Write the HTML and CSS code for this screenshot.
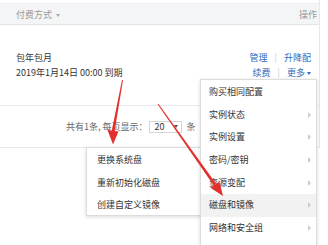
FILE: index.html
```html
<!DOCTYPE html>
<html lang="zh-CN">
<head>
<meta charset="utf-8">
<link rel="stylesheet" href="styles.css">
</head>
<body>
<div class="page">
  <div class="table">
    <div class="thead">
      <span class="th">付费方式 <i class="caret"></i></span>
      <span class="th">操作</span>
    </div>
    <div class="row">
      <div class="pay">
        <div>包年包月</div>
        <div>2019年1月14日 00:00 到期</div>
      </div>
      <div class="ops">
        <div class="ops-line"><a>管理</a><span class="sep">|</span><a>升降配</a></div>
        <div class="ops-line"><a>续费</a><span class="sep">|</span><a>更多<i class="caret blue"></i></a></div>
      </div>
    </div>
    <div class="pager">
      <span>共有1条, 每页显示：</span>
      <span class="select">20<i class="caret dark"></i></span>
      <span>条</span>
    </div>
  </div>

  <ul class="menu submenu">
    <li>更换系统盘</li>
    <li>重新初始化磁盘</li>
    <li>创建自定义镜像</li>
  </ul>

  <ul class="menu main-menu">
    <li>购买相同配置</li>
    <li class="has-sub">实例状态</li>
    <li class="has-sub">实例设置</li>
    <li class="has-sub">密码/密钥</li>
    <li class="has-sub">资源变配</li>
    <li class="has-sub active">磁盘和镜像</li>
    <li class="has-sub">网络和安全组</li>
  </ul>

  <svg class="arrows" width="328" height="245" viewBox="0 0 328 245">
    <polygon points="122,80 123,80 114.5,132 111.5,132" fill="#e3302d"/>
    <polygon points="107.5,130 118.5,131.5 113,144.5" fill="#e3302d"/>
    <polygon points="157.6,104.3 158.4,103.7 216.1,183.7 213.7,185.5" fill="#e3302d"/>
    <polygon points="210.4,187.7 219.4,181.4 223,196" fill="#e3302d"/>
  </svg>
</div>
</body>
</html>
```
FILE: styles.css
```css
* { box-sizing: border-box; }
html, body { margin: 0; padding: 0; }
body {
  width: 328px;
  height: 245px;
  overflow: hidden;
  background: #fff;
  font-family: "Noto Sans CJK SC", "Microsoft YaHei", sans-serif;
  font-size: 9px;
  color: #333;
}
.page { position: relative; width: 328px; height: 245px; overflow: hidden; }

.table {
  width: 320px;
  border-right: 1px solid #e6e8eb;
  padding-top: 3px;
}
.thead {
  height: 22px;
  background: #f4f5f7;
  border-top: 1px solid #eceef1;
  border-bottom: 1px solid #e1e4e8;
  display: flex;
  justify-content: space-between;
  align-items: center;
  padding: 0 2px 0 16px;
  color: #999;
}
.caret {
  display: inline-block;
  width: 0; height: 0;
  border-left: 2.5px solid transparent;
  border-right: 2.5px solid transparent;
  border-top: 3px solid #aaa;
  vertical-align: middle;
  margin-left: 2px;
}
.caret.blue { border-top-color: #2b6cbf; }
.caret.dark { border-top-color: #555; margin-left: 9px; }

.row {
  height: 81px;
  border-bottom: 1px solid #e8eaed;
  display: flex;
  justify-content: space-between;
  padding: 25px 8px 0 16px;
  line-height: 15px;
}
.ops { text-align: right; }
.ops a { color: #2b6cbf; }
.ops .sep { color: #ccc; margin: 0 7px; }

.pager {
  height: 42px;
  border-bottom: 1px solid #e6e8eb;
  display: flex;
  align-items: center;
  padding-left: 66px;
  color: #666;
}
.select {
  display: inline-flex;
  align-items: center;
  height: 12px;
  border: 1px solid #d6d6d6;
  padding: 0 3px 0 5px;
  margin: 0 5px 0 1px;
  color: #333;
  line-height: 10px;
}

.menu {
  position: absolute;
  list-style: none;
  margin: 0;
  background: #fff;
  border: 1px solid #dcdcdc;
  box-shadow: 0 1px 4px rgba(0,0,0,0.15);
  color: #333;
}
.menu li {
  height: 22.7px;
  line-height: 22.7px;
  position: relative;
  white-space: nowrap;
}
.main-menu {
  left: 200px;
  top: 79px;
  width: 117px;
  padding: 1px 0 30px;
}
.main-menu li { padding-left: 8px; }
.main-menu li.active { background: #f2f2f2; }
.main-menu li.has-sub::after {
  content: "";
  position: absolute;
  right: 5px;
  top: 8px;
  width: 0; height: 0;
  border-top: 3px solid transparent;
  border-bottom: 3px solid transparent;
  border-left: 3px solid #ccc;
}
.submenu {
  left: 86px;
  top: 147px;
  width: 117px;
  height: 69px;
  padding: 1px 0 0;
}
.submenu li { padding-left: 10px; height: 22.5px; line-height: 22.5px; }

.arrows { position: absolute; left: 0; top: 0; pointer-events: none; }
```
